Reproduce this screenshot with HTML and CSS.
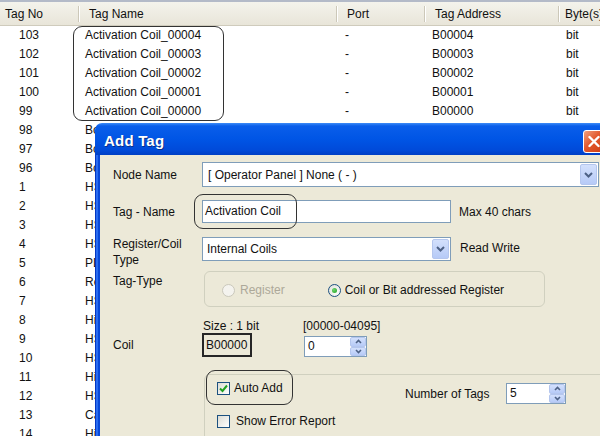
FILE: index.html
```html
<!DOCTYPE html>
<html lang="en">

<head>
    <meta charset="UTF-8">
    <title>Tag List - Add Tag</title>
    <link rel="stylesheet" href="styles.css">
</head>

<body>
    <div class="list">
        <div class="list-head">
            <div class="c1">Tag No</div>
            <div class="c2">Tag Name</div>
            <div class="c3">Port</div>
            <div class="c4">Tag Address</div>
            <div class="c5">Byte(s)</div>
        </div>
        <div class="list-row"><div class="c1">103</div><div class="c2">Activation Coil_00004</div><div class="c3">-</div><div class="c4">B00004</div><div class="c5">bit</div></div>
        <div class="list-row"><div class="c1">102</div><div class="c2">Activation Coil_00003</div><div class="c3">-</div><div class="c4">B00003</div><div class="c5">bit</div></div>
        <div class="list-row"><div class="c1">101</div><div class="c2">Activation Coil_00002</div><div class="c3">-</div><div class="c4">B00002</div><div class="c5">bit</div></div>
        <div class="list-row"><div class="c1">100</div><div class="c2">Activation Coil_00001</div><div class="c3">-</div><div class="c4">B00001</div><div class="c5">bit</div></div>
        <div class="list-row"><div class="c1">99</div><div class="c2">Activation Coil_00000</div><div class="c3">-</div><div class="c4">B00000</div><div class="c5">bit</div></div>
        <div class="list-row"><div class="c1">98</div><div class="c2">Bottle_Count</div><div class="c3">-</div><div class="c4">B00098</div><div class="c5">bit</div></div>
        <div class="list-row"><div class="c1">97</div><div class="c2">Bottle_Reject</div><div class="c3">-</div><div class="c4">B00097</div><div class="c5">bit</div></div>
        <div class="list-row"><div class="c1">96</div><div class="c2">Bottle_Ok</div><div class="c3">-</div><div class="c4">B00096</div><div class="c5">bit</div></div>
        <div class="list-row"><div class="c1">1</div><div class="c2">HSC_Value</div><div class="c3">-</div><div class="c4">S00001</div><div class="c5">2</div></div>
        <div class="list-row"><div class="c1">2</div><div class="c2">HSC_Preset</div><div class="c3">-</div><div class="c4">S00002</div><div class="c5">2</div></div>
        <div class="list-row"><div class="c1">3</div><div class="c2">HSC_Reset</div><div class="c3">-</div><div class="c4">S00003</div><div class="c5">2</div></div>
        <div class="list-row"><div class="c1">4</div><div class="c2">HSC_Mode</div><div class="c3">-</div><div class="c4">S00004</div><div class="c5">2</div></div>
        <div class="list-row"><div class="c1">5</div><div class="c2">PLC_Status</div><div class="c3">-</div><div class="c4">S00005</div><div class="c5">2</div></div>
        <div class="list-row"><div class="c1">6</div><div class="c2">Reset</div><div class="c3">-</div><div class="c4">S00006</div><div class="c5">2</div></div>
        <div class="list-row"><div class="c1">7</div><div class="c2">HSC_Count</div><div class="c3">-</div><div class="c4">S00007</div><div class="c5">2</div></div>
        <div class="list-row"><div class="c1">8</div><div class="c2">High_Limit</div><div class="c3">-</div><div class="c4">S00008</div><div class="c5">2</div></div>
        <div class="list-row"><div class="c1">9</div><div class="c2">HSC_Enable</div><div class="c3">-</div><div class="c4">S00009</div><div class="c5">2</div></div>
        <div class="list-row"><div class="c1">10</div><div class="c2">HSC_Done</div><div class="c3">-</div><div class="c4">S00010</div><div class="c5">2</div></div>
        <div class="list-row"><div class="c1">11</div><div class="c2">High_Alarm</div><div class="c3">-</div><div class="c4">S00011</div><div class="c5">2</div></div>
        <div class="list-row"><div class="c1">12</div><div class="c2">HSC_Error</div><div class="c3">-</div><div class="c4">S00012</div><div class="c5">2</div></div>
        <div class="list-row"><div class="c1">13</div><div class="c2">Cap_Count</div><div class="c3">-</div><div class="c4">S00013</div><div class="c5">2</div></div>
        <div class="list-row"><div class="c1">14</div><div class="c2">High_Speed</div><div class="c3">-</div><div class="c4">S00014</div><div class="c5">2</div></div>
    </div>

    <!-- marker drawn round the new tags -->
    <span class="annot annot-list"></span>

    <div class="dialog">
        <div class="titlebar">
            <span class="title">Add Tag</span>
            <span class="close-btn">
                <svg width="20" height="21" viewBox="0 0 20 21"><path d="M5.5 6l9 9M14.5 6l-9 9" stroke="#fff" stroke-width="2.4" stroke-linecap="round"/></svg>
            </span>
        </div>
        <div class="frame">
            <div class="dlg-body">
                <div class="field f-node">
                    <span class="lbl">Node Name</span>
                    <div class="combo combo-node">
                        <span class="combo-text">[ Operator Panel ] None ( - )</span>
                        <span class="drop"><svg width="9" height="6" viewBox="0 0 9 6"><path d="M1 1l3.5 3.5L8 1" fill="none" stroke="#4d6185" stroke-width="2"/></svg></span>
                    </div>
                </div>

                <div class="field f-name">
                    <span class="lbl">Tag - Name</span>
                    <div class="mark-wrap">
                        <div class="textbox tb-name">Activation Coil</div>
                        <span class="annot annot-name"></span>
                    </div>
                    <span class="hint">Max 40 chars</span>
                </div>

                <div class="field f-type">
                    <span class="lbl lbl-top">Register/Coil<br>Type</span>
                    <div class="combo combo-type">
                        <span class="combo-text">Internal Coils</span>
                        <span class="drop"><svg width="9" height="6" viewBox="0 0 9 6"><path d="M1 1l3.5 3.5L8 1" fill="none" stroke="#4d6185" stroke-width="2"/></svg></span>
                    </div>
                    <span class="hint hint-rw">Read Write</span>
                </div>

                <div class="field f-tagtype">
                    <span class="lbl lbl-tt">Tag-Type</span>
                    <div class="grp grp-type">
                        <span class="opt off"><span class="radio"></span>Register</span>
                        <span class="opt opt-coil"><span class="radio on"></span>Coil or Bit addressed Register</span>
                    </div>
                </div>

                <div class="sizes">
                    <span class="size-txt">Size : 1 bit</span>
                    <span>[00000-04095]</span>
                </div>

                <div class="field f-coil">
                    <span class="lbl">Coil</span>
                    <span class="addr">B00000</span>
                    <div class="spin spin-coil">
                        <span class="spin-val">0</span>
                        <span class="spin-btns">
                            <span class="sb"><svg width="7" height="5" viewBox="0 0 7 5"><path d="M1 4l2.5-2.5L6 4" fill="none" stroke="#4d6185" stroke-width="1.6"/></svg></span>
                            <span class="sb"><svg width="7" height="5" viewBox="0 0 7 5"><path d="M1 1l2.5 2.5L6 1" fill="none" stroke="#4d6185" stroke-width="1.6"/></svg></span>
                        </span>
                    </div>
                </div>

                <div class="grp grp-auto">
                    <div class="auto-row">
                        <span class="chk-item chk-auto">
                            <span class="chk on"><svg width="11" height="11" viewBox="0 0 11 11"><path d="M2 5.5l2.5 2.5 4.5-5.5" fill="none" stroke="#21a121" stroke-width="2"/></svg></span>
                            Auto Add
                            <span class="annot annot-auto"></span>
                        </span>
                        <span class="num-lbl">Number of Tags</span>
                        <div class="spin spin-num">
                            <span class="spin-val">5</span>
                            <span class="spin-btns">
                                <span class="sb"><svg width="7" height="5" viewBox="0 0 7 5"><path d="M1 4l2.5-2.5L6 4" fill="none" stroke="#4d6185" stroke-width="1.6"/></svg></span>
                                <span class="sb"><svg width="7" height="5" viewBox="0 0 7 5"><path d="M1 1l2.5 2.5L6 1" fill="none" stroke="#4d6185" stroke-width="1.6"/></svg></span>
                            </span>
                        </div>
                    </div>
                    <span class="chk-item chk-err">
                        <span class="chk"></span>
                        Show Error Report
                    </span>
                </div>
            </div>
        </div>
    </div>
</body>

</html>
```

FILE: styles.css
```css
* {
    box-sizing: border-box;
}

body {
    margin: 0;
    width: 600px;
    height: 436px;
    overflow: hidden;
    position: relative;
    background: #fff;
    font-family: "Liberation Sans", Arial, sans-serif;
    font-size: 12px;
    color: #111;
}

/* tag list behind the dialog */
.list {
    width: 600px;
    height: 436px;
    overflow: hidden;
}

.list-head,
.list-row {
    display: grid;
    grid-template-columns: 78px 258px 88px 134px 62px;
    white-space: nowrap;
}

.list-head {
    height: 26px;
    background: linear-gradient(#f4f3ec, #e8e5d9);
    border-top: 2px solid #b3bac8;
    border-bottom: 1px solid #cfcbbc;
    line-height: 24px;
}

.list-head div {
    padding-left: 11px;
}

.list-head .c1 {
    padding-left: 5px;
}

.list-head .c5 {
    padding-left: 7px;
}

.list-head div + div {
    background: linear-gradient(#ccc8b9, #ccc8b9) 0 4px / 1px 16px no-repeat,
        linear-gradient(#fff, #fff) 1px 4px / 1px 16px no-repeat;
}

.list-row {
    height: 19px;
    line-height: 19px;
}

.list-row .c1 { padding-left: 19px; }
.list-row .c2 { padding-left: 7px; }
.list-row .c3 { padding-left: 9px; }
.list-row .c4 { padding-left: 8px; }
.list-row .c5 { padding-left: 8px; }

/* hand-drawn style markers */
.annot {
    position: absolute;
    border: 1.5px solid #333;
    border-radius: 9px;
    pointer-events: none;
}

.annot-list {
    left: 73px;
    top: 26px;
    width: 151px;
    height: 95px;
}

/* Add Tag dialog */
.dialog {
    position: absolute;
    left: 95px;
    top: 123px;
    width: 515px;
    height: 313px;
    display: flex;
    flex-direction: column;
    overflow: hidden;
}

.titlebar {
    height: 32px;
    flex: none;
    display: flex;
    justify-content: space-between;
    align-items: flex-start;
    padding: 7px 5px 0 9px;
    border-radius: 7px 7px 0 0;
    background: linear-gradient(#3d8cf7 0, #0a5eea 3px, #0055e5 50%, #004ad9 85%, #003fc4 100%);
}

.title {
    color: #fff;
    font-weight: bold;
    font-size: 15px;
    line-height: 22px;
    letter-spacing: 0.2px;
    text-shadow: 1px 1px 0 #0a2f8a;
}

.close-btn {
    width: 22px;
    height: 23px;
    border: 1px solid #fff;
    border-radius: 3px;
    background: linear-gradient(135deg, #f0a080, #e2582c 45%, #cf3d14);
    display: flex;
    align-items: center;
    justify-content: center;
}

.frame {
    flex: 1;
    display: flex;
    padding-left: 5px;
    background: linear-gradient(to right, #0337c2 0 1px, #2a6cf0 1px 3px, #0848d8 3px);
}

.dlg-body {
    flex: 1;
    background: #ece9d8;
    padding: 7px 0 0 13px;
}

.field {
    display: flex;
    align-items: center;
}

.lbl {
    width: 89px;
    flex: none;
    line-height: 16px;
}

.combo {
    display: flex;
    align-items: stretch;
    background: #fff;
    border: 1px solid #7f9db9;
}

.combo-text {
    flex: 1;
    display: flex;
    align-items: center;
}

.drop {
    width: 17px;
    margin: 1px;
    display: flex;
    align-items: center;
    justify-content: center;
    border: 1px solid #b4c6ee;
    border-radius: 2px;
    background: linear-gradient(#d3e0fc, #b6caf7);
}

.f-node {
    height: 25px;
}

.combo-node {
    width: 397px;
    height: 25px;
}

.combo-node .combo-text {
    padding-left: 5px;
}

.f-name {
    margin-top: 13px;
    height: 23px;
}

.mark-wrap {
    position: relative;
}

.textbox {
    background: #fff;
    border: 1px solid #7f9db9;
}

.tb-name {
    width: 249px;
    height: 23px;
    line-height: 21px;
    padding-left: 2px;
}

.annot-name {
    left: -8px;
    top: -6px;
    width: 103px;
    height: 35px;
}

.hint {
    margin-left: 8px;
}

.f-type {
    margin-top: 14px;
    height: 24px;
}

.lbl-top {
    align-self: flex-start;
    margin-top: -1px;
}

.combo-type {
    width: 249px;
    height: 24px;
}

.combo-type .combo-text {
    padding-left: 4px;
}

.hint-rw {
    margin-left: 9px;
    margin-top: -2px;
}

.f-tagtype {
    margin-top: 10px;
    align-items: flex-start;
}

.lbl-tt {
    margin-top: 2px;
}

.grp {
    border: 1px solid #d0d0bf;
    border-radius: 6px;
}

.grp-type {
    margin-left: 2px;
    width: 341px;
    height: 36px;
    display: flex;
    align-items: center;
    padding: 2px 0 0 17px;
}

.opt {
    display: flex;
    align-items: center;
    gap: 5px;
}

.opt.off {
    color: #aca899;
}

.opt-coil {
    margin-left: 43px;
    gap: 4px;
}

.radio {
    width: 13px;
    height: 13px;
    border-radius: 50%;
    border: 1px solid #1c5180;
    background: radial-gradient(circle at 65% 65%, #fff, #dcdcd4);
    display: flex;
    align-items: center;
    justify-content: center;
}

.off .radio {
    border-color: #cac8bb;
    background: #f4f3ee;
}

.radio.on::after {
    content: "";
    width: 5px;
    height: 5px;
    border-radius: 50%;
    background: radial-gradient(circle at 35% 35%, #6fd56f, #21a121);
}

.sizes {
    margin-top: 12px;
    padding-left: 90px;
    line-height: 14px;
    display: flex;
}

.size-txt {
    width: 100px;
}

.f-coil {
    height: 24px;
}

.addr {
    width: 50px;
    height: 24px;
    border: 2px solid #262626;
    padding-left: 2px;
    line-height: 20px;
}

.spin {
    display: flex;
    background: #fff;
    border: 1px solid #7f9db9;
    height: 21px;
}

.spin-val {
    flex: 1;
    padding-left: 3px;
    line-height: 19px;
}

.spin-btns {
    width: 16px;
    display: flex;
    flex-direction: column;
}

.sb {
    flex: 1;
    display: flex;
    align-items: center;
    justify-content: center;
    border: 1px solid #b4c6ee;
    border-radius: 2px;
    background: linear-gradient(#d3e0fc, #b6caf7);
}

.spin-coil {
    width: 63px;
    margin-left: 52px;
    align-self: flex-start;
    margin-top: 3px;
}

.grp-auto {
    margin: 17px 0 0 91px;
    width: 420px;
    height: 120px;
    border-radius: 6px 0 0 0;
    padding: 8px 0 0 12px;
}

.auto-row {
    display: flex;
    align-items: center;
    height: 21px;
}

.chk-item {
    display: flex;
    align-items: center;
    gap: 5px;
    position: relative;
}

.chk-auto {
    width: 188px;
    align-self: flex-start;
    margin-top: -2px;
    gap: 4px;
}

.annot-auto {
    left: -11px;
    top: -11px;
    width: 87px;
    height: 35px;
}

.chk {
    width: 13px;
    height: 13px;
    border: 1px solid #1c5180;
    background: linear-gradient(135deg, #dcdcd4, #fff);
    display: flex;
    align-items: center;
    justify-content: center;
}

.num-lbl {
    width: 101px;
    margin-top: 1px;
}

.spin-num {
    width: 60px;
}

.chk-err {
    margin-top: 10px;
    gap: 6px;
}
```
